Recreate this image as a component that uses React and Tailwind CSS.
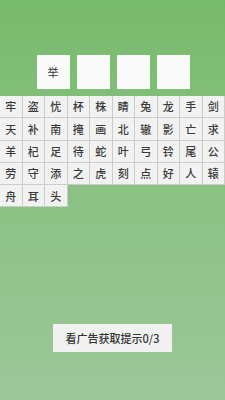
import React from 'react';

const ANSWER = ['举', '', '', ''];
const CHARS = [
    '牢', '盗', '忧', '杯', '株', '睛', '兔', '龙', '手', '剑',
    '天', '补', '南', '掩', '画', '北', '辙', '影', '亡', '求',
    '羊', '杞', '足', '待', '蛇', '叶', '弓', '铃', '尾', '公',
    '劳', '守', '添', '之', '虎', '刻', '点', '好', '人', '辕',
    '舟', '耳', '头',
];

const font = { fontFamily: '"Noto Sans CJK SC", "Liberation Sans", sans-serif' };

export default function App() {
    return (
        <div className="w-[225px] h-[400px] flex flex-col bg-gradient-to-b from-[#77ba6b] via-[#8cc285] to-[#9cc799] overflow-hidden" style={font}>
            {/* answer slots */}
            <div className="mt-[55px] flex justify-center gap-[7px] pl-[1px]">
                {ANSWER.map((c, i) => (
                    <div key={i} className="w-[33px] h-[34px] bg-[#fafafa] flex items-center justify-center text-[11px] text-[#333]">
                        {c}
                    </div>
                ))}
            </div>

            {/* character pool */}
            <div className="mt-[7px] grid grid-cols-10 w-[225px]">
                {CHARS.map((c, i) => (
                    <div key={i} className="h-[22.3px] bg-[#f2f2f2] border-r border-b border-[#c9cfc6] flex items-center justify-center text-[11px] text-[#3a3a3a] font-medium">
                        {c}
                    </div>
                ))}
            </div>

            <div className="flex-1" />

            {/* hint button */}
            <div className="mb-[48px] flex justify-center">
                <button className="w-[119px] h-[28px] bg-[#f1f1f1] text-[11px] text-[#333] font-medium flex items-center justify-center">
                    看广告获取提示0/3
                </button>
            </div>
        </div>
    );
}
